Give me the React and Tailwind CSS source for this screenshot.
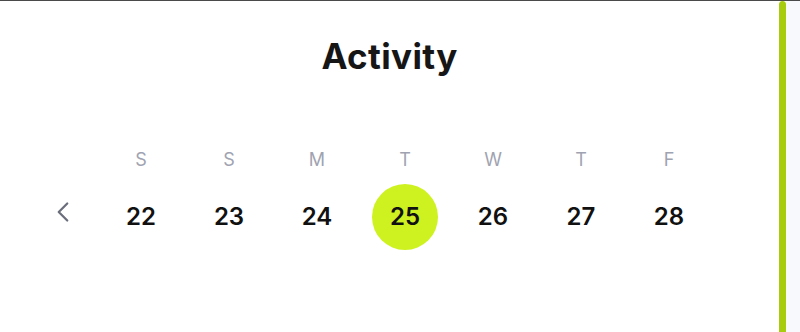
import { ChevronLeft } from 'lucide-react';

const DAYS = [
  { label: 'S', date: 22 },
  { label: 'S', date: 23 },
  { label: 'M', date: 24 },
  { label: 'T', date: 25, active: true },
  { label: 'W', date: 26 },
  { label: 'T', date: 27 },
  { label: 'F', date: 28 },
];

export default function App() {
  return (
    <div className="w-[800px] h-[332px] flex border-t border-[#4a4a4a] bg-white overflow-hidden" style={{ fontFamily: 'Inter, "Noto Sans", sans-serif' }}>
      <section className="w-[779px] flex flex-col items-center">
        <h1 className="mt-[33px] text-[35px] leading-[44px] font-bold text-[#161616] tracking-[0.01em]">Activity</h1>

        <div className="mt-[56px] w-full flex">
          <div className="w-[97px] flex flex-col">
            <div className="h-[50px]" />
            <div className="h-[66px] flex items-center justify-center pl-[28px]">
              <ChevronLeft size={34} strokeWidth={1.6} className="text-[#6b6f7b] -mt-[10px]" />
            </div>
          </div>
          <div className="grid grid-cols-7 w-[616px]">
            {DAYS.map((d, i) => (
              <div key={i} className="flex flex-col items-center">
                <div className="h-[50px] flex items-center justify-center text-[18px] text-[#9fa3b1]">{d.label}</div>
                <div
                  className={
                    'w-[66px] h-[66px] rounded-full flex items-center justify-center text-[24px] font-semibold text-[#111] ' +
                    (d.active ? 'bg-[#cdf21f]' : '')
                  }
                >
                  {d.date}
                </div>
              </div>
            ))}
          </div>
        </div>
      </section>
      <div className="w-[7px] h-full bg-[#a7cc0d] rounded-t-full" />
      <div className="flex-1 bg-[#f8f9fc]" />
    </div>
  );
}
